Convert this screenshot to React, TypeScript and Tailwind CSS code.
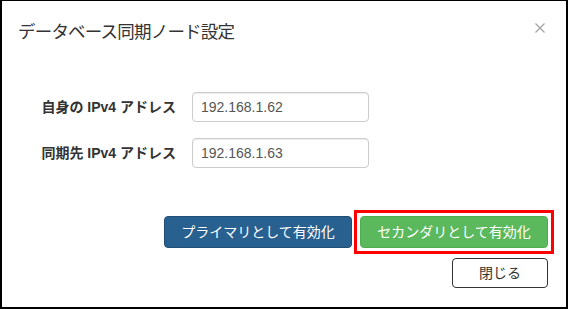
import React from "react";

const font = "font-['Liberation_Sans','Noto_Sans_CJK_JP',sans-serif]";

const FormRow: React.FC<{ label: string; value: string; className?: string }> = ({ label, value, className }) => (
    <div className={`flex items-center ${className ?? ""}`}>
        <label className="w-[174px] text-right text-[14px] font-bold text-[#333]">{label}</label>
        <input
            readOnly
            value={value}
            className="ml-4 w-[177px] h-[30px] px-2 text-[14px] text-[#555] border border-[#ccc] rounded-[4px] outline-none shadow-[inset_0_1px_1px_rgba(0,0,0,0.075)]"
        />
    </div>
);

const App: React.FC = () => {
    return (
        <div className={`${font} w-[568px] h-[309px] bg-white border-black border-t border-x-2 border-b-2 flex flex-col`}>
            <div className="flex items-start justify-between pl-4 pr-[21px] pt-[18px]">
                <h4 className="text-[17.5px] tracking-[-0.8px] leading-[26px] text-[#333]">データベース同期ノード設定</h4>
                <svg width="10" height="10" viewBox="0 0 10 10" className="mt-[4px]">
                    <path d="M0.5 0.5 L9.5 9.5 M9.5 0.5 L0.5 9.5" stroke="#a3a3a3" strokeWidth="1.2" />
                </svg>
            </div>

            <form className="mt-[47px]">
                <FormRow label="自身の IPv4 アドレス" value="192.168.1.62" />
                <FormRow label="同期先 IPv4 アドレス" value="192.168.1.63" className="mt-4" />
            </form>

            <div className="mt-[42px] flex items-center justify-end pr-3">
                <button className="w-[188px] h-[32px] mr-[2px] rounded-[4px] bg-[#286090] border border-[#204d74] text-white text-[14px]">
                    プライマリとして有効化
                </button>
                <div className="border-[3px] border-[#ff0000] p-[3px]">
                    <button className="block w-[188px] h-[32px] rounded-[4px] bg-[#5cb85c] border border-[#4cae4c] text-white text-[14px]">
                        セカンダリとして有効化
                    </button>
                </div>
            </div>

            <div className="mt-[4px] flex justify-end pr-[18px]">
                <button className="w-[96px] h-[30px] rounded-[4px] bg-white border border-[#333] text-[#333] text-[14px]">
                    閉じる
                </button>
            </div>
        </div>
    );
};

export default App;
